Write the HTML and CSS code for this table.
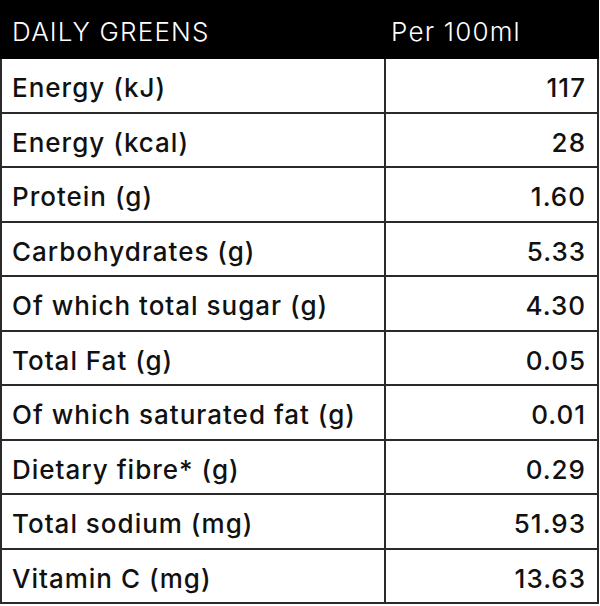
FILE: index.html
```html
<!DOCTYPE html>
<html>
<head>
<meta charset="utf-8">
<link rel="stylesheet" href="styles.css">
</head>
<body>
<div class="nutrition">
  <div class="head">
    <div class="head-label">DAILY GREENS</div>
    <div class="head-value">Per 100ml</div>
  </div>
  <div class="row"><div class="label">Energy (kJ)</div><div class="value">117</div></div>
  <div class="row"><div class="label">Energy (kcal)</div><div class="value">28</div></div>
  <div class="row"><div class="label">Protein (g)</div><div class="value">1.60</div></div>
  <div class="row"><div class="label">Carbohydrates (g)</div><div class="value">5.33</div></div>
  <div class="row"><div class="label">Of which total sugar (g)</div><div class="value">4.30</div></div>
  <div class="row"><div class="label">Total Fat (g)</div><div class="value">0.05</div></div>
  <div class="row"><div class="label">Of which saturated fat (g)</div><div class="value">0.01</div></div>
  <div class="row"><div class="label">Dietary fibre* (g)</div><div class="value">0.29</div></div>
  <div class="row"><div class="label">Total sodium (mg)</div><div class="value">51.93</div></div>
  <div class="row"><div class="label">Vitamin C (mg)</div><div class="value">13.63</div></div>
</div>
</body>
</html>
```
FILE: styles.css
```css
html, body {
  margin: 0;
  padding: 0;
  background: #ffffff;
  overflow: hidden;
}
body {
  font-family: Inter, "Liberation Sans", sans-serif;
  color: #111111;
  width: 600px;
}
.nutrition {
  width: 599px;
  border-left: 2px solid #2a2a2a;
  border-right: 2px solid #2a2a2a;
  box-sizing: border-box;
}
.head {
  display: grid;
  grid-template-columns: 382px 1fr;
  height: 59px;
  background: #000000;
  color: #ffffff;
  font-size: 26px;
  font-weight: 300;
  letter-spacing: 1.2px;
  margin: 0 -2px;
  padding: 0 2px;
}
.head-label,
.head-value {
  display: flex;
  align-items: center;
  padding-top: 4px;
}
.head-label {
  padding-left: 10px;
}
.head-value {
  padding-left: 7px;
}
.row {
  display: grid;
  grid-template-columns: 382px 1fr;
  height: 54.5px;
  border-bottom: 2px solid #2a2a2a;
  box-sizing: border-box;
  font-size: 26px;
  font-weight: 500;
  letter-spacing: 1px;
}
.label,
.value {
  display: flex;
  align-items: center;
  padding-top: 5px;
}
.label {
  padding-left: 10px;
}
.value {
  justify-content: flex-end;
  border-left: 2px solid #2a2a2a;
  padding-right: 11px;
}
```
